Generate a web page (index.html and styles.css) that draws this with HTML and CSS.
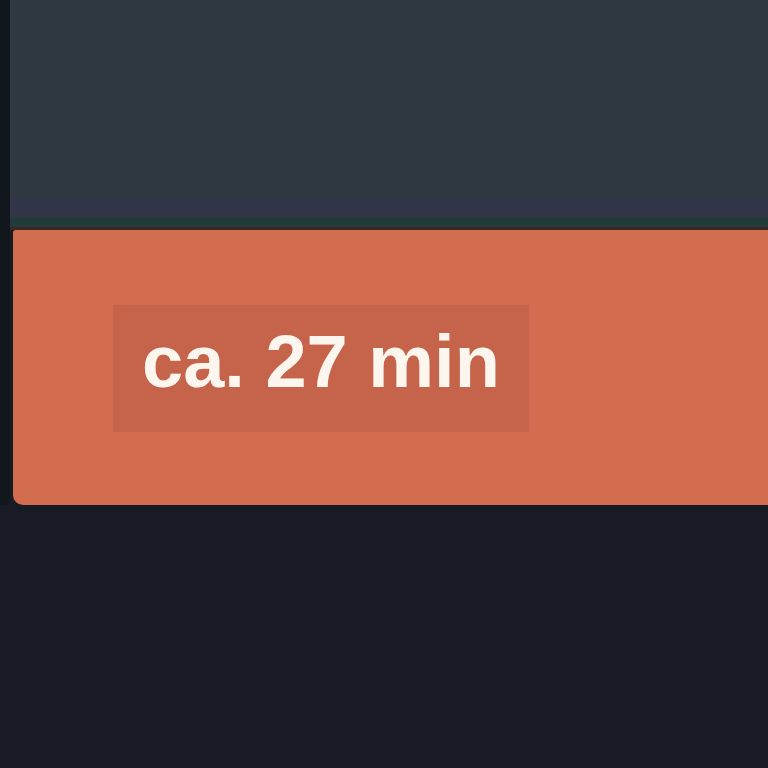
FILE: index.html
```html
<!DOCTYPE html>
<html>
<head>
<meta charset="utf-8">
<link rel="stylesheet" href="styles.css">
</head>
<body>
<div class="page">
  <div class="panel"></div>
  <div class="panel-edge"></div>
  <div class="panel-line"></div>
  <div class="panel-shadow"></div>
  <div class="bar">
    <div class="badge">ca. 27 min</div>
  </div>
</div>
</body>
</html>
```
FILE: styles.css
```css
html, body {
  margin: 0;
  padding: 0;
  background: #181b23;
  width: 768px;
  height: 768px;
  overflow: hidden;
}
.page {
  padding-left: 10px;
  display: flex;
  flex-direction: column;
  background: linear-gradient(to right, #12171e 0, #12171e 10px, transparent 10px);
}
.panel {
  height: 197px;
  background: #2d3841;
}
.panel-edge {
  height: 20px;
  background: #313547;
}
.panel-line {
  height: 10px;
  background: #213a3a;
}
.panel-shadow {
  height: 3px;
  background: #3a2722;
}
.bar {
  margin-left: 3px;
  height: 275px;
  background: #d36d4f;
  border-radius: 3px 0 0 10px;
  padding: 75px 0 0 100px;
  box-sizing: border-box;
}
.badge {
  display: inline-flex;
  align-items: center;
  height: 127px;
  padding: 0 29px 14px;
  background: #c5644a;
  color: #fdf6ef;
  font-family: "Liberation Sans", Arial, sans-serif;
  font-weight: bold;
  font-size: 74px;
  letter-spacing: 0;
  box-sizing: border-box;
}
```
